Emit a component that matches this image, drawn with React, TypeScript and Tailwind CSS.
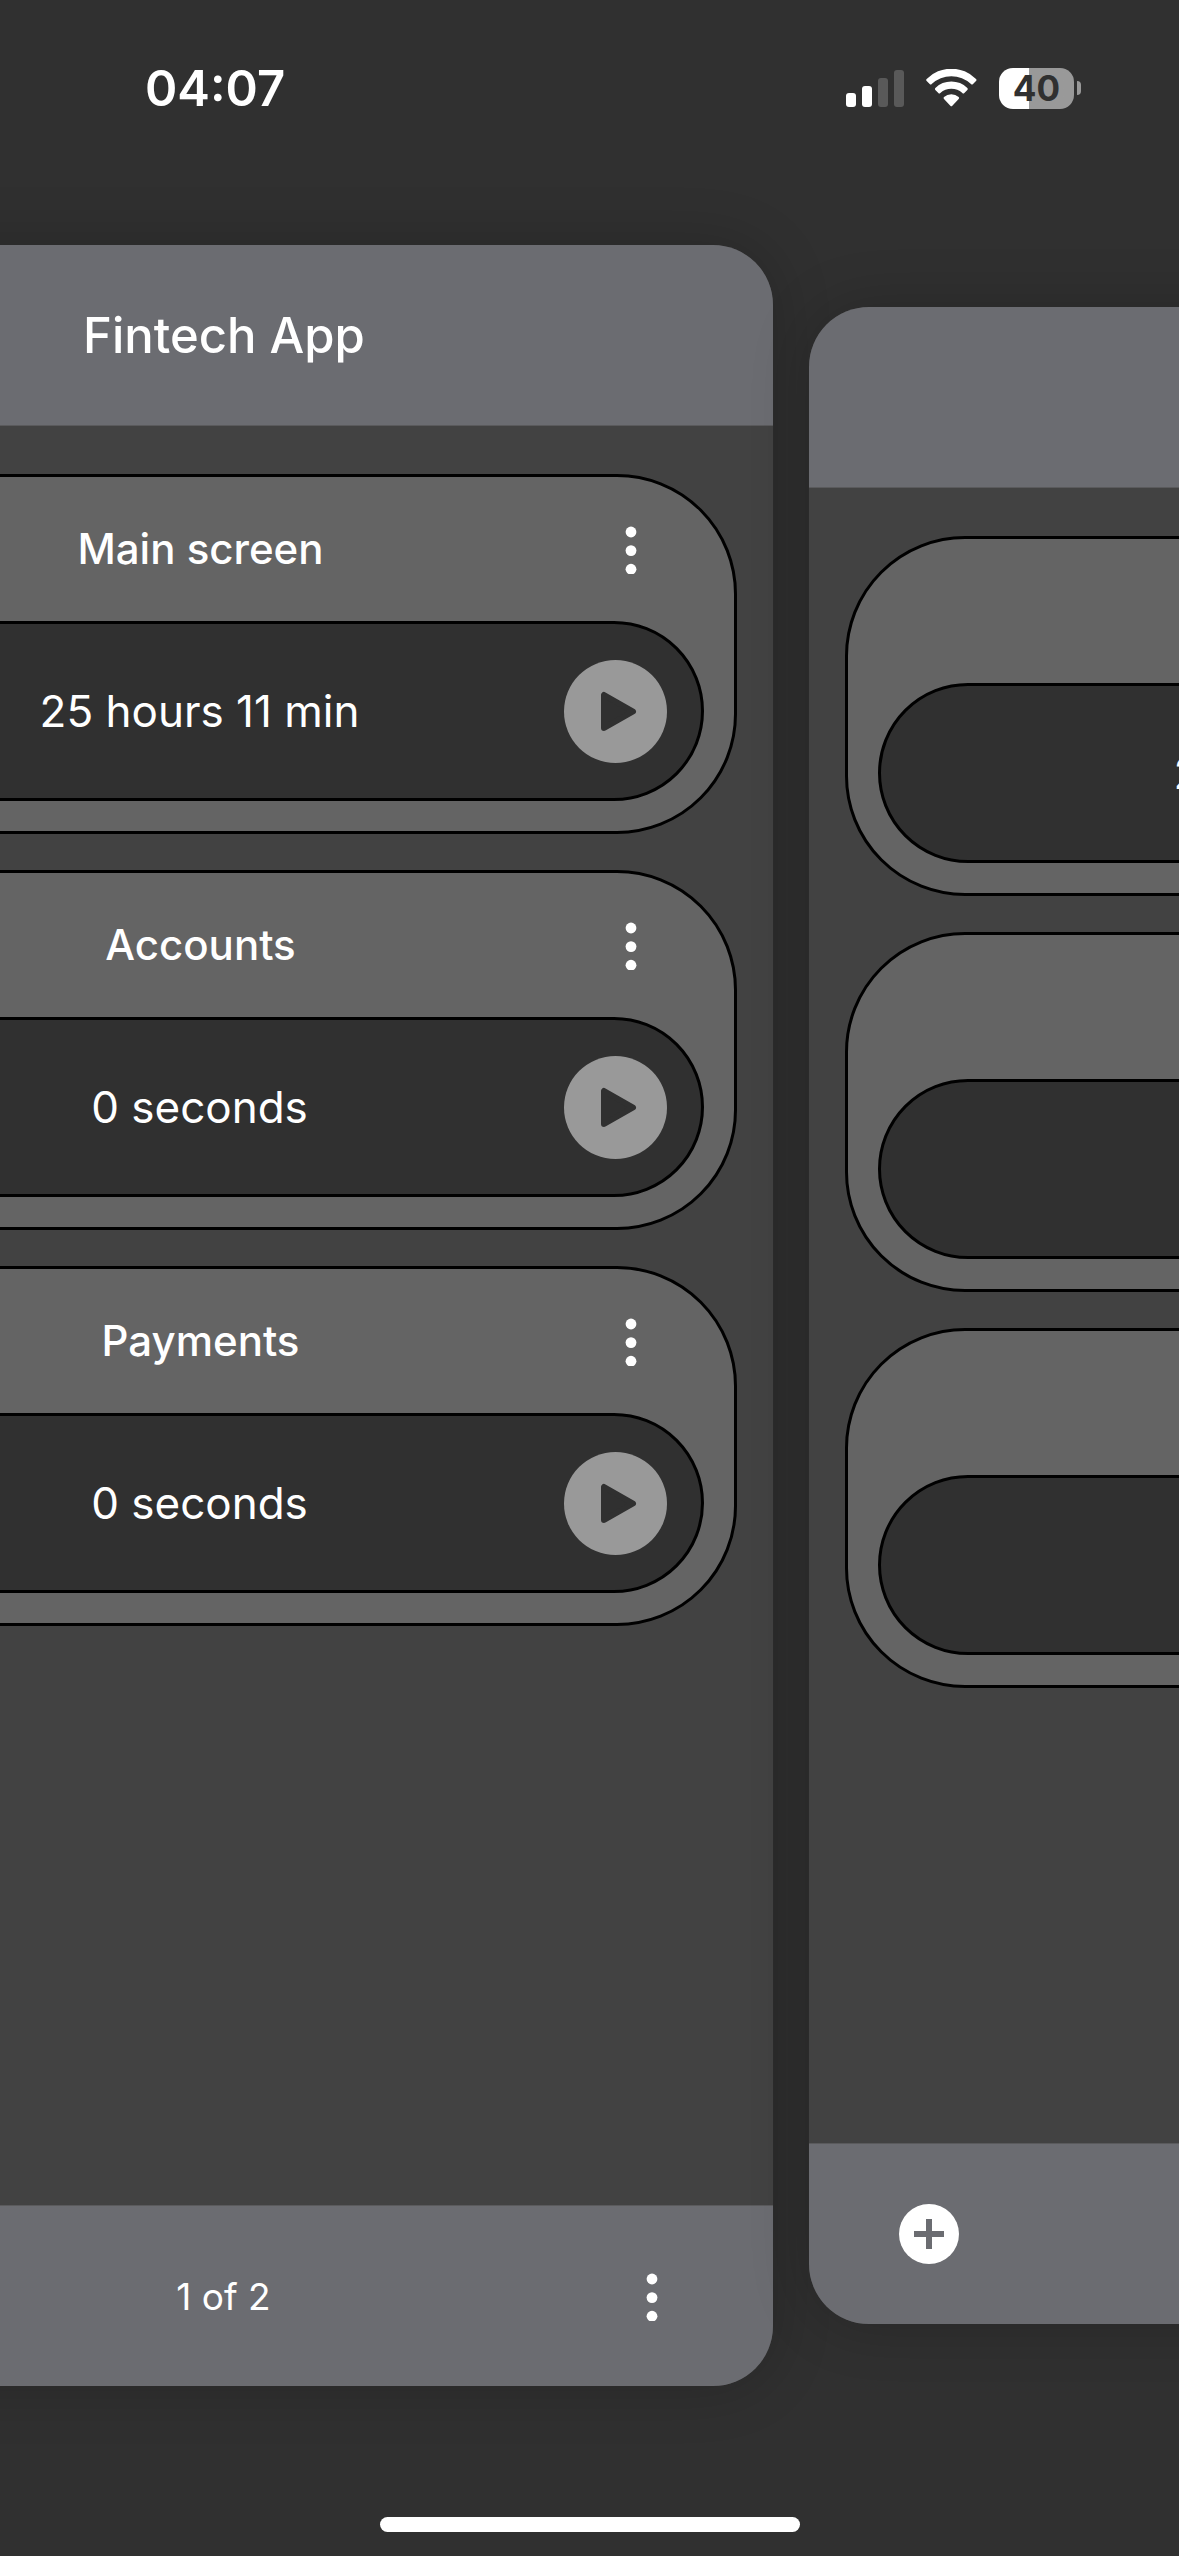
const SCREENS = [
  { name: "Main screen", time: "25 hours 11 min" },
  { name: "Accounts", time: "0 seconds" },
  { name: "Payments", time: "0 seconds" },
];

function SignalIcon() {
  return (
    <svg width="58" height="37" viewBox="0 0 58 37" fill="#fff" aria-hidden="true">
      <rect x="0" y="23" width="10" height="14" rx="3" />
      <rect x="16" y="16" width="10" height="21" rx="3" />
      <rect x="32" y="8" width="10" height="29" rx="3" fill="#595959" />
      <rect x="48" y="0" width="10" height="37" rx="3" fill="#595959" />
    </svg>
  );
}

function WifiIcon() {
  return (
    <svg width="51" height="38" viewBox="0 0 153 114" fill="#fff" aria-hidden="true">
      <path d="M2 30A104 104 0 0 1 150 30Q153 33 150 36L141 45Q138 48 135 45A86 86 0 0 0 17 45Q14 48 11 45L2 36Q-1 33 2 30Z" />
      <path d="M28 57A68 68 0 0 1 124 57Q127 60 124 63L115 72Q112 75 109 72A50 50 0 0 0 43 72Q40 75 37 72L28 63Q25 60 28 57Z" />
      <path d="M54 84A33 33 0 0 1 98 84Q101 87 98 90L79 110Q76 113 73 110L54 90Q51 87 54 84Z" />
    </svg>
  );
}

function Battery() {
  return (
    <div className="flex items-center gap-[3px]">
      <div className="flex h-[41px] w-[75px] items-center justify-center rounded-[14px] bg-linear-to-r from-white from-40% to-[#999999] to-40% text-[35px] leading-none font-bold text-[#303030]">
        40
      </div>
      <div className="h-[14px] w-1 rounded-r-full bg-[#999999]" />
    </div>
  );
}

function StatusBar() {
  return (
    <header className="flex h-[245px] shrink-0 items-start justify-between pt-14 pr-[98px] pl-[145px]">
      <div className="flex h-16 items-center text-[49px] leading-none font-semibold">04:07</div>
      <div className="flex h-16 items-center gap-[22px]">
        <SignalIcon />
        <WifiIcon />
        <Battery />
      </div>
    </header>
  );
}

function MoreButton({ label }: { label: string }) {
  return (
    <button type="button" aria-label={label} className="flex h-[72px] w-[60px] items-center justify-center">
      <svg width="12" height="50" viewBox="0 0 12 50" fill="#fff" aria-hidden="true">
        <circle cx="6" cy="8" r="5.4" />
        <circle cx="6" cy="26.6" r="5.4" />
        <circle cx="6" cy="45.2" r="5.4" />
      </svg>
    </button>
  );
}

function ScreenItem({ name, time }: { name: string; time: string }) {
  return (
    <li className="rounded-[120px] border-3 border-black bg-[#646464] px-[30px] pb-[30px]">
      <div className="flex h-36 items-center pr-[43px] pl-14">
        <h2 className="flex-1 text-center text-[42px] leading-none font-medium">{name}</h2>
        <MoreButton label={`${name} options`} />
      </div>
      <div className="flex h-[180px] items-center rounded-full border-3 border-black bg-[#303030] pr-[34px] pl-[88px]">
        <span className="flex-1 text-center text-[44px] leading-none">{time}</span>
        <button type="button" aria-label={`Start ${name}`}>
          <svg width="103" height="103" viewBox="0 0 103 103" aria-hidden="true">
            <circle cx="51.5" cy="51.5" r="51.5" fill="#999999" />
            <path
              d="M40 35V68L69 51.5Z"
              fill="#303030"
              stroke="#303030"
              strokeWidth="6"
              strokeLinejoin="round"
            />
          </svg>
        </button>
      </div>
    </li>
  );
}

function ProjectCard({ raised }: { raised: boolean }) {
  return (
    <section
      className={`flex w-[calc(100%-81px)] shrink-0 flex-col overflow-hidden rounded-[60px] bg-[#424242] shadow-[0_0_60px_rgba(0,0,0,0.2)] ${
        raised ? "" : "my-[62px]"
      }`}
    >
      <div className="flex h-[181px] shrink-0 items-center justify-center border-b border-[#5a5a5c] bg-[#6b6c71]">
        <h1 className="text-[49px] leading-none font-medium">Fintech App</h1>
      </div>
      <ul className="flex flex-1 flex-col gap-9 px-9 pt-12">
        {SCREENS.map((s) => (
          <ScreenItem key={s.name} name={s.name} time={s.time} />
        ))}
      </ul>
      <div className="flex h-[181px] shrink-0 items-center justify-between border-t border-[#5a5a5c] bg-[#6b6c71] pr-[91px] pl-[90px]">
        <button type="button" aria-label="Add screen">
          <svg width="60" height="60" viewBox="0 0 60 60" aria-hidden="true">
            <circle cx="30" cy="30" r="30" fill="#fff" />
            <path d="M30 15V45M15 30H45" stroke="#6b6c71" strokeWidth="6" />
          </svg>
        </button>
        <span className="text-[37px] leading-none">1 of 2</span>
        <MoreButton label="Project options" />
      </div>
    </section>
  );
}

export default function App() {
  return (
    <div className="flex min-h-screen flex-col overflow-hidden bg-[#303030] font-['Inter',sans-serif] text-white">
      <StatusBar />
      <main className="flex flex-1">
        <div className="-ml-[325px] flex w-full shrink-0 gap-9">
          <ProjectCard raised />
          <ProjectCard raised={false} />
        </div>
      </main>
      <footer className="flex h-[170px] shrink-0 items-end justify-center pb-6">
        <div className="h-[15px] w-[420px] rounded-full bg-white" />
      </footer>
    </div>
  );
}
